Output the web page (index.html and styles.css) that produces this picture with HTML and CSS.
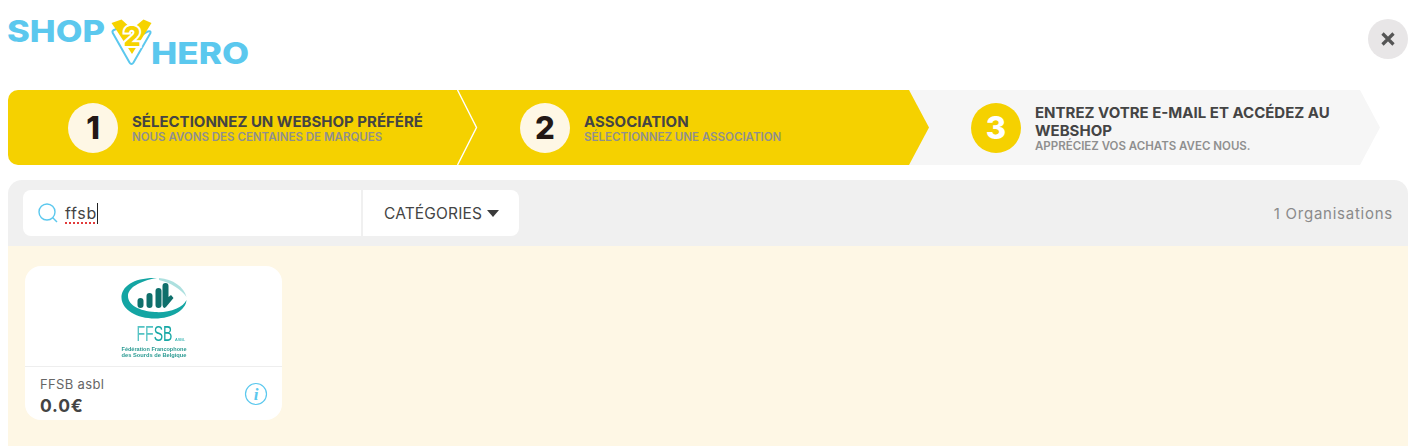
FILE: index.html
```html
<!DOCTYPE html>
<html lang="fr">
<head>
<meta charset="utf-8">
<title>Shop2Hero</title>
<link rel="stylesheet" href="styles.css">
</head>
<body>
<header class="header">
  <svg class="logo" width="250" height="70" viewBox="0 0 250 70">
    <text class="logo-word" x="7" y="42" textLength="98" lengthAdjust="spacingAndGlyphs">SHOP</text>
    <text class="logo-word" x="151" y="64" textLength="98" lengthAdjust="spacingAndGlyphs">HERO</text>
    <path d="M112.500 32.500 L129.500 62.500 Q131.500 65.500 133.500 62.500 L150.500 33 Q151 30.500 148 31.500 L140 36 M112.500 32.500 Q112 30.500 115 29.500 L119 28" fill="none" stroke="#5bc8ee" stroke-width="2"/>
    <path d="M111.500 23 L121.500 19.500 L132 29 L143.500 19.500 L151.500 23 L144 35 L132 54 L117 31 Z" fill="#f6d300"/>
    <text class="logo-two" x="132" y="46">2</text>
  </svg>
  <button class="close" type="button" aria-label="Fermer">
    <svg width="16" height="16" viewBox="0 0 16 16"><path d="M2.500 2.500 L13.500 13.500 M13.500 2.500 L2.500 13.500" stroke="#555" stroke-width="3.200"/></svg>
  </button>
</header>

<ol class="steps">
  <li class="step step-one">
    <span class="num">1</span>
    <div class="step-text">
      <strong>SÉLECTIONNEZ UN WEBSHOP PRÉFÉRÉ</strong>
      <small>NOUS AVONS DES CENTAINES DE MARQUES</small>
    </div>
    <svg class="chevron" width="21" height="75" viewBox="0 0 21 75"><path d="M0.500 0 L19.500 37.500 L0.500 75" fill="none" stroke="#fff" stroke-width="1.400"/></svg>
  </li>
  <li class="step step-two">
    <span class="num">2</span>
    <div class="step-text">
      <strong>ASSOCIATION</strong>
      <small>SÉLECTIONNEZ UNE ASSOCIATION</small>
    </div>
  </li>
  <li class="step step-three">
    <span class="num">3</span>
    <div class="step-text">
      <strong>ENTREZ VOTRE E-MAIL ET ACCÉDEZ AU WEBSHOP</strong>
      <small>APPRÉCIEZ VOS ACHATS AVEC NOUS.</small>
    </div>
  </li>
</ol>

<section class="toolbar">
  <div class="search">
    <div class="search-field">
      <svg width="22" height="22" viewBox="0 0 22 22"><circle cx="10" cy="10" r="8" fill="none" stroke="#5bc8ee" stroke-width="1.400"/><path d="M15.800 15.800 L20 20" stroke="#5bc8ee" stroke-width="1.400"/></svg>
      <span class="typed">ffsb</span><span class="caret"></span>
    </div>
    <div class="categories">CATÉGORIES <span class="tri"></span></div>
  </div>
  <span class="count">1 Organisations</span>
</section>

<main class="results">
  <article class="card">
    <div class="card-image">
      <svg class="ffsb" width="70" height="82" viewBox="0 0 70 82">
        <path fill="#14a5a3" d="M38 1 C16 0 2 9 2.500 21 C3 33 18 41.500 36 41.500 C53 41.500 67 33 67.500 23 C64 31 50 36 36 35 C20 34 9 28 9 19 C9 11 20 4 38 1 Z"/>
        <path fill="#14a5a3" opacity=".35" d="M40 1 C54 2 65 10 67.500 20 C62 12 52 6 40 3 Z"/>
        <rect x="18.500" y="21" width="6" height="10" rx="3" fill="#0f6f6b"/>
        <rect x="27.500" y="16" width="6" height="15" rx="3" fill="#0f6f6b"/>
        <rect x="36.500" y="11" width="6" height="20" rx="3" fill="#0f6f6b"/>
        <path d="M43.500 9 Q43.500 6 46.500 6 Q49.500 6 49.500 9 V20 L52 18 L54.500 21 L47 30 Q44 32.500 43.500 28 Z" fill="#0f6f6b"/>
        <text class="ffsb-name" x="17.500" y="64" textLength="36" lengthAdjust="spacingAndGlyphs">FF<tspan class="ffsb-dark">SB</tspan></text>
        <text class="ffsb-asbl" x="56" y="64">ASBL</text>
        <text class="ffsb-small" x="2.500" y="74" textLength="65" lengthAdjust="spacingAndGlyphs">Fédération Francophone</text>
        <text class="ffsb-small" x="2.500" y="80" textLength="65" lengthAdjust="spacingAndGlyphs">des Sourds de Belgique</text>
      </svg>
    </div>
    <div class="card-info">
      <div>
        <p class="card-name">FFSB asbl</p>
        <p class="card-price">0.0€</p>
      </div>
      <svg class="info" width="24" height="24" viewBox="0 0 24 24"><circle cx="12" cy="12" r="10.500" fill="none" stroke="#5bc8ee" stroke-width="1.200"/><text class="info-i" x="12" y="18">i</text></svg>
    </div>
  </article>
</main>
</body>
</html>
```
FILE: styles.css
```css
* { box-sizing: border-box; }
html, body { margin: 0; padding: 0; }
body {
  width: 1424px;
  height: 446px;
  overflow: hidden;
  background: #fff;
  font-family: "Inter", "Liberation Sans", sans-serif;
  color: #444;
}
.header {
  height: 90px;
  display: flex;
  justify-content: space-between;
  align-items: flex-start;
  padding-right: 16px;
}
.logo { display: block; }
.logo-word { font-family: "Inter", sans-serif; font-weight: 800; font-size: 30px; fill: #5bc8ee; }
.logo-two {
  font-family: "Inter", sans-serif;
  font-weight: 800;
  font-size: 27px;
  text-anchor: middle;
  fill: #f6d300;
  stroke: #fff;
  stroke-width: 4px;
  paint-order: stroke;
}
.close {
  width: 40px;
  height: 40px;
  margin-top: 19px;
  border: 0;
  padding: 0;
  border-radius: 50%;
  background: #e8e6e7;
  display: flex;
  align-items: center;
  justify-content: center;
}
.steps {
  list-style: none;
  margin: 0 0 15px 8px;
  padding: 0;
  display: flex;
  height: 75px;
}
.step {
  position: relative;
  width: 471px;
  height: 75px;
  flex: none;
  margin-left: -20px;
  padding-left: 61px;
  display: flex;
  align-items: center;
  gap: 14px;
  background: #f5d100;
}
.step-one {
  width: 470px;
  margin-left: 0;
  padding-left: 60px;
  z-index: 3;
  border-radius: 10px 0 0 10px;
  background: linear-gradient(#f5d100, #f5d100) left / 450px 100% no-repeat;
}
.step-one::before {
  content: "";
  position: absolute;
  right: 0;
  top: 0;
  width: 21px;
  height: 75px;
  background: #f5d100;
  clip-path: polygon(0 0, 100% 50%, 0 100%);
}
.step-two {
  z-index: 2;
  padding-left: 62px;
  clip-path: polygon(0 0, 451px 0, 100% 50%, 451px 100%, 0 100%);
}
.step-three {
  z-index: 1;
  padding-left: 62px;
  background: #f6f6f6;
  clip-path: polygon(0 0, 451px 0, 100% 50%, 451px 100%, 0 100%);
}
.chevron { position: absolute; right: 0; top: 0; }
.num {
  position: relative;
  flex: none;
  width: 50px;
  height: 50px;
  border-radius: 50%;
  background: #fef7e5;
  color: #231815;
  font-size: 31px;
  font-weight: 800;
  display: flex;
  align-items: center;
  justify-content: center;
}
.step-three .num { background: #f5d100; color: #fff; }
.step-text { position: relative; width: 305px; }
.step-text strong {
  display: block;
  font-size: 15px;
  line-height: 18px;
  font-weight: 700;
  color: #444;
}
.step-text small {
  display: block;
  font-size: 11.500px;
  line-height: 12px;
  font-weight: 600;
  color: #8f8f8f;
}
.toolbar {
  margin: 0 16px 0 8px;
  height: 66px;
  padding: 10px 15px;
  background: #f0f0f0;
  border-radius: 14px 14px 0 0;
  display: flex;
  justify-content: space-between;
  align-items: center;
}
.search {
  width: 496px;
  height: 46px;
  background: #fff;
  border-radius: 8px;
  display: flex;
}
.search-field {
  width: 340px;
  border-right: 2px solid #f0f0f0;
  display: flex;
  align-items: center;
  padding-left: 14px;
  font-size: 16px;
  letter-spacing: .7px;
  color: #444;
}
.search-field svg { margin-right: 6px; flex: none; }
.typed {
  text-decoration: underline dotted #e23b3b 2px;
  text-underline-offset: 3px;
}
.caret { width: 1px; height: 21px; background: #222; }
.categories {
  flex: 1;
  display: flex;
  align-items: center;
  padding-left: 21px;
  gap: 5px;
  font-size: 15.500px;
  letter-spacing: .15px;
  color: #444;
}
.tri {
  width: 0;
  height: 0;
  border-left: 6px solid transparent;
  border-right: 6px solid transparent;
  border-top: 7px solid #3a3a3a;
}
.count { font-size: 15px; letter-spacing: .75px; color: #8a8a8a; }
.results {
  margin: 0 16px 0 8px;
  height: 200px;
  background: #fef7e5;
  padding: 20px 17px;
}
.card {
  width: 257px;
  height: 154px;
  background: #fff;
  border-radius: 16px;
  display: flex;
  flex-direction: column;
}
.card-image {
  height: 101px;
  border-bottom: 1px solid #eee;
  display: flex;
  justify-content: center;
  padding: 11px 0 0 0;
}
.ffsb { display: block; filter: blur(.5px); }
.ffsb-name { font-family: "Liberation Sans", sans-serif; font-size: 22px; fill: #55c3c4; }
.ffsb-dark { fill: #17a8a6; }
.ffsb-asbl { font-family: "Liberation Sans", sans-serif; font-size: 4px; fill: #17a8a6; }
.ffsb-small { font-family: "Liberation Sans", sans-serif; font-size: 5.400px; font-weight: 700; fill: #2a9a92; }
.card-info {
  flex: 1;
  display: flex;
  justify-content: space-between;
  align-items: center;
  padding: 4px 14px 0 15px;
}
.card-name { margin: 0; font-size: 13px; line-height: 18px; letter-spacing: .35px; color: #666; }
.card-price { margin: 2px 0 0; font-size: 17.500px; line-height: 22px; font-weight: 700; letter-spacing: .8px; color: #444; }
.info { margin-top: -3px; }
.info-i { font-family: "Liberation Serif", serif; font-style: italic; font-weight: 700; font-size: 17px; fill: #5bc8ee; text-anchor: middle; }
```
